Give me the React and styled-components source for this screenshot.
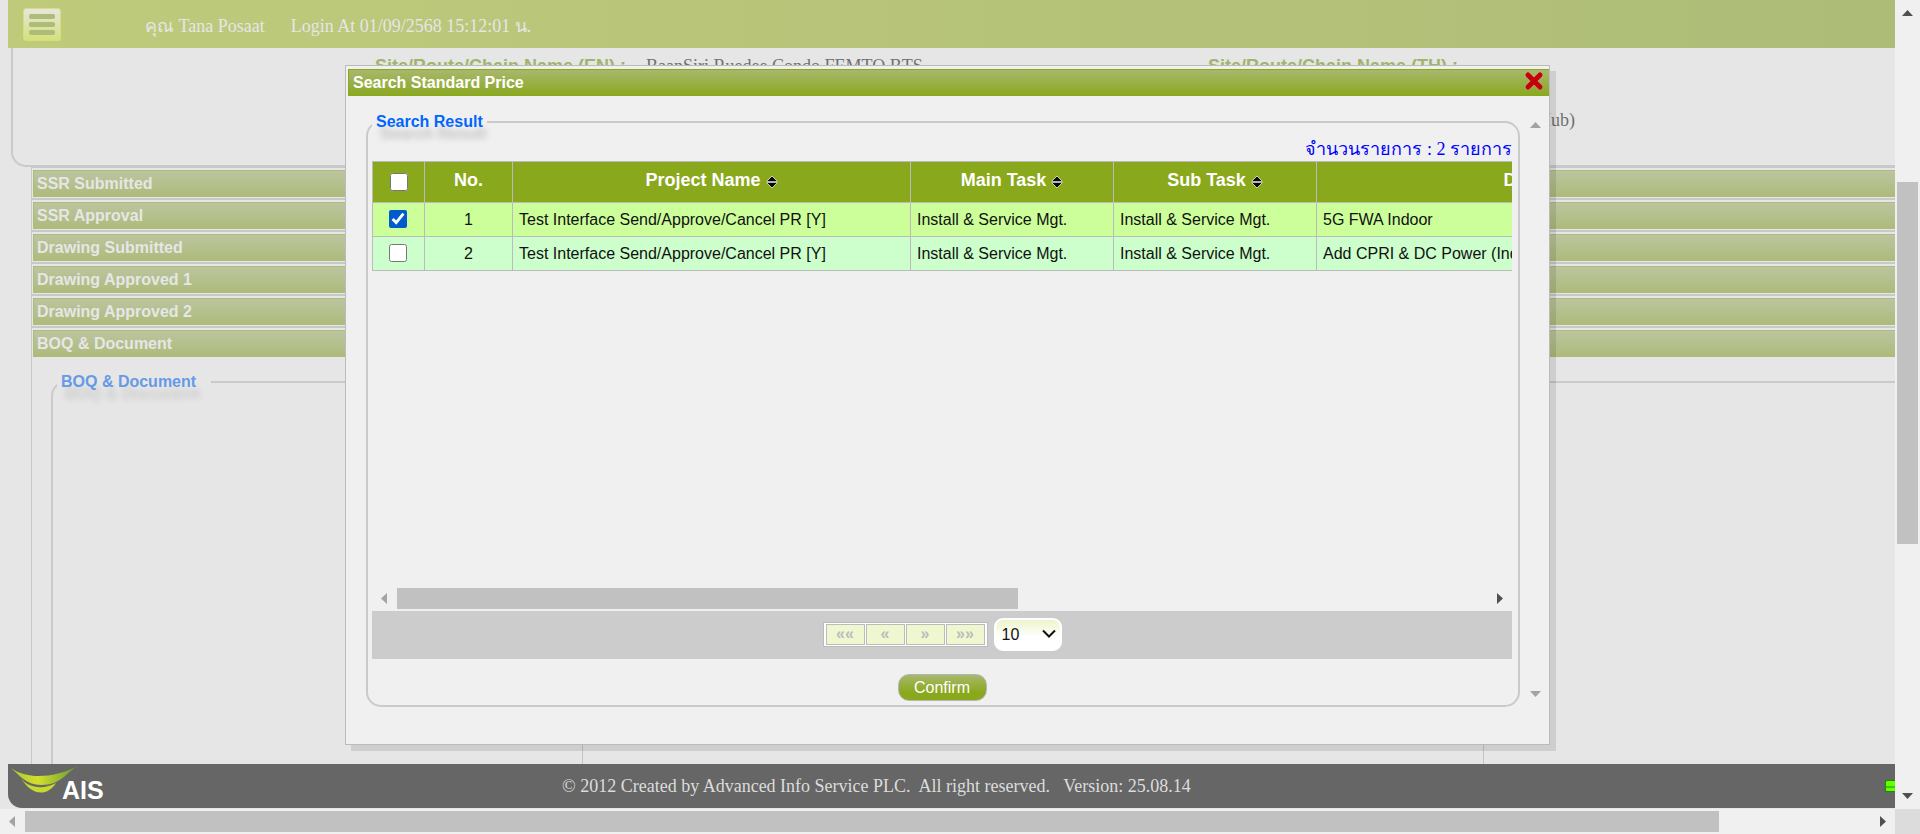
import React, { useState } from "react";
import styled, { createGlobalStyle } from "styled-components";

const sans = `"Liberation Sans", Arial, sans-serif`;
const serif = `"Liberation Serif", "Times New Roman", serif`;

const GlobalStyle = createGlobalStyle`
  * { box-sizing: border-box; }
  body { margin: 0; background: #e6e6e6; font-family: ${serif}; font-size: 18px; overflow: hidden; }
  button, input, select { font: inherit; margin: 0; }
`;

const Screen = styled.div`
  display: grid;
  grid-template: minmax(0, 1fr) 25px / minmax(0, 1fr) 25px;
  height: 100vh;
`;

const View = styled.div`
  position: relative;
  display: flex;
  flex-direction: column;
  overflow: hidden;
  padding-bottom: 1px;
`;

const Header = styled.header`
  display: flex;
  align-items: center;
  flex: none;
  height: 48px;
  margin-left: 8px;
  padding-left: 15px;
  color: #e6e6e6;
  background: linear-gradient(90deg, #bfcb7b, #adbc77);
  white-space: nowrap;
`;

const MenuButton = styled.button`
  display: flex;
  flex-direction: column;
  justify-content: center;
  gap: 3px;
  width: 38px;
  height: 33px;
  margin-right: 84px;
  padding: 0 5px;
  border: 1px solid #d6df7a;
  border-radius: 3px;
  background: linear-gradient(#e6e6e0, #d6e07c);
`;

const MenuLine = styled.span`
  height: 5px;
  border-radius: 2px;
  background: #adbc77;
`;

const UserInfo = styled.div`
  display: flex;
  gap: 26px;
  padding-top: 3px;
`;

const Main = styled.main`
  flex: 1;
  min-height: 0;
  overflow: hidden;
`;

const SitePanel = styled.section`
  display: grid;
  grid-template-columns: 362px 271px 562px 367px 1fr;
  align-content: start;
  row-gap: 30px;
  height: 119px;
  margin-left: 11px;
  padding-top: 6px;
  border: 2px solid #c9c9c9;
  border-width: 0 0 2px 2px;
  border-bottom-left-radius: 15px;
  line-height: 24px;
  color: #707070;
  white-space: nowrap;
`;

const SiteLabel = styled.span`
  grid-column: ${(p) => p.$col};
  font: bold 18px/24px ${sans};
  color: #9fb56d;
  text-shadow: 5px 12px 6px rgba(0, 0, 0, 0.1);
`;

const SiteValue = styled.span`
  grid-column: ${(p) => p.$col};
  justify-self: ${(p) => (p.$end ? "end" : "start")};
`;

const Accordion = styled.section`
  margin-left: 31px;
  border-left: 1px solid #c8c8c8;
`;

const AccordionItem = styled.div`
  padding: 2px 0 1px 1px;
  border: 1px solid #c8c8ca;
  border-width: 1px 0;
  &:last-of-type { border-bottom-color: transparent; }
`;

const AccordionBar = styled.button`
  display: block;
  width: 100%;
  height: 27px;
  padding: 0 3px;
  border: 1px solid #adbc77;
  border-width: 1px 0 1px 1px;
  background: linear-gradient(#bbc5a0, #aebb7a);
  color: #e6e6e6;
  font: bold 16px/24px ${sans};
  text-align: left;
`;

const Group = styled.fieldset`
  min-width: 0;
  margin: ${(p) => (p.$page ? "11px 0 0 19px" : "0")};
  padding: 0 6px 4px 4px;
  border: 2px solid #cacaca;
  border-radius: 15px;
  ${(p) => p.$page && `padding: 0; border-right: 0; border-top-right-radius: 0; border-bottom-right-radius: 0;`}
`;

const GroupTitle = styled.legend`
  margin-left: ${(p) => (p.$page ? "4px" : "0")};
  padding: 0 ${(p) => (p.$page ? "15px" : "4px")} 0 4px;
  font: bold 16px/24px ${sans};
  color: ${(p) => (p.$page ? "#6699e6" : "#0066ff")};
  text-shadow: 4px 12px 6px rgba(0, 0, 0, ${(p) => (p.$page ? 0.12 : 0.2)});
`;

const DocumentGrid = styled.div`
  display: grid;
  grid-template-columns: 530px 901px 1fr;
  height: 480px;
`;

const DocumentCell = styled.div`
  border-right: 1px solid #c4c4c4;
`;

const Footer = styled.footer`
  display: flex;
  align-items: center;
  flex: none;
  height: 44px;
  margin-left: 8px;
  border-bottom-left-radius: 14px;
  background: #666;
  color: #dcdcdc;
  white-space: pre;
  overflow: hidden;
`;

const Logo = styled.svg`
  flex: none;
  width: 100px;
  height: 44px;
  margin-right: 454px;
`;

const Status = styled.span`
  width: 10px;
  height: 12px;
  margin-left: auto;
  border: 1px solid #1d8a08;
  border-right: 0;
  border-radius: 2px 0 0 2px;
  background: linear-gradient(#66ff00 50%, #3fc80a 50% 75%, #66ff00 75%);
`;

const Overlay = styled.div`
  position: absolute;
  inset: 65px 0 auto;
  display: flex;
  justify-content: center;
`;

const Dialog = styled.section`
  width: calc(100% - 690px);
  min-width: 900px;
  padding: 3px 0 37px 2px;
  border: 1px solid #bbb;
  background: #f0f0f0;
  box-shadow: 6px 6px 0 rgba(0, 0, 0, 0.1);
`;

const DialogTitle = styled.header`
  display: flex;
  justify-content: space-between;
  height: 27px;
  padding: 0 5px 0 4px;
  border: 1px solid #8aa81c;
  border-right: 0;
  background: linear-gradient(#a8b86c, #8ba822);
`;

const DialogName = styled.h1`
  margin: 0;
  font: bold 16px/25px ${sans};
  color: #fff;
`;

const CloseButton = styled.button`
  width: 20px;
  height: 20px;
  padding: 0;
  border: 0;
  background: none;
  svg { display: block; }
`;

const DialogBody = styled.div`
  display: grid;
  grid-template-columns: minmax(0, 1fr) 25px;
  gap: 3px;
  padding: 14px 1px 0 18px;
`;

const Count = styled.p`
  margin: 0;
  padding-top: 4px;
  line-height: 23px;
  color: #0000ff;
  text-align: right;
`;

const TableArea = styled.div`
  height: 425px;
  overflow: hidden;
`;

const Table = styled.table`
  width: 1434px;
  table-layout: fixed;
  border-collapse: collapse;
  font: 16px/24px ${sans};
  color: #111;
  white-space: nowrap;
`;

const HeadCell = styled.th`
  width: ${(p) => p.$w}px;
  height: 41px;
  padding: 0 0 4px;
  border: 1px solid #bbb;
  background: #8aa81c;
  color: #fff;
  font-size: 18px;
  svg { margin-left: 5px; vertical-align: -3px; }
`;

const Row = styled.tr`
  height: 34px;
  background: ${(p) => (p.$selected ? "#ccff99" : "#ccffcc")};
`;

const Cell = styled.td`
  padding: 0 6px;
  border: 1px solid #bbb;
  text-align: ${(p) => (p.$center ? "center" : "left")};
`;

const CheckCell = styled(Cell)`
  padding: 0 2px 2px 0;
`;

const Check = styled.input`
  display: block;
  width: 18px;
  height: 18px;
  && { margin: ${(p) => (p.$head ? "4px" : "0")} auto 0; }
  accent-color: #005bcc;
`;

const Pager = styled.nav`
  display: flex;
  align-items: center;
  justify-content: center;
  gap: 6px;
  height: 48px;
  margin-bottom: 15px;
  padding-bottom: 1px;
  background: #ccc;
`;

const PageButtons = styled.div`
  display: flex;
  gap: 1px;
  padding: 1px 2px;
  border: 1px solid #bbb;
  background: #fff;
`;

const PageButton = styled.button`
  width: 39px;
  height: 21px;
  padding: 0 0 2px;
  border: 1px solid #bbb;
  background: #eff7d0;
  color: #bbb;
  font: bold 16px/18px ${sans};
`;

const PageSizeBox = styled.div`
  position: relative;
  width: 68px;
  height: 33px;
  svg {
    position: absolute;
    top: 11px;
    right: 6px;
    pointer-events: none;
  }
`;

const PageSize = styled.select`
  appearance: none;
  width: 100%;
  height: 100%;
  padding: 0 6px;
  border: 2px solid #fff;
  border-radius: 9px;
  background: linear-gradient(#eef5cc, #fff 60%);
  color: #111;
  font: 16px/24px ${sans};
`;

const Confirm = styled.button`
  display: block;
  width: 89px;
  height: 27px;
  && { margin: 0 auto; }
  padding: 0;
  border: 1px solid #b4b4bc;
  border-radius: 11px;
  background: linear-gradient(#a8b86c, #8aa81c 70%);
  color: #fff;
  font: 16px/24px ${sans};
`;

const Scroll = styled.div`
  display: flex;
  flex-direction: ${(p) => (p.$vertical ? "column" : "row")};
  padding-top: ${(p) => (p.$inset ? "2px" : "0")};
  background: #f0f0f0;
`;

const ScrollStep = styled.button`
  flex: none;
  width: 25px;
  height: 25px;
  padding: 0;
  border: 0;
  background: none;
  svg { display: block; }
`;

const ScrollTrack = styled.div`
  display: flex;
  flex: 1;
  flex-direction: ${(p) => (p.$vertical ? "column" : "row")};
  padding: ${(p) => (p.$vertical ? "0 2px" : "2px 0")};
`;

const ScrollThumb = styled.div`
  flex: 0 0 ${(p) => p.$size}%;
  margin: ${(p) => (p.$vertical ? `${p.$before}px 0 0` : "0")};
  background: #c1c1c1;
`;

const Corner = styled.div`
  background: #dcdcdc;
`;

const arrows = {
  up: "M7 16h11l-5.5-6z",
  down: "M7 9h11l-5.5 6z",
  left: "M15 7v11l-6-5.500z",
  right: "M10 7v11l6-5.500z",
};

function Step({ dir, disabled }) {
  return (
    <ScrollStep type="button" aria-label={`Scroll ${dir}`} tabIndex={-1}>
      <svg width="25" height="25" viewBox="0 0 25 25">
        <path d={arrows[dir]} fill={disabled ? "#a3a3a3" : "#505050"} />
      </svg>
    </ScrollStep>
  );
}

function ScrollBar({ vertical, inset, size, before = 0, atStart, atEnd }) {
  return (
    <Scroll $vertical={vertical} $inset={inset}>
      <Step dir={vertical ? "up" : "left"} disabled={atStart} />
      <ScrollTrack $vertical={vertical}>
        {size && <ScrollThumb $vertical={vertical} $size={size} $before={before} />}
      </ScrollTrack>
      <Step dir={vertical ? "down" : "right"} disabled={atEnd} />
    </Scroll>
  );
}

function SortIcon() {
  return (
    <svg width="12" height="14" viewBox="0 0 12 14">
      <path d="M6 1 11 6v2L6 13 1 8V6z" fill="#0a0a0a" stroke="#c9d3a0" strokeWidth="1" />
      <path d="M1 7h10" stroke="#b5b5b5" strokeWidth="2" />
    </svg>
  );
}

const sections = [
  "SSR Submitted",
  "SSR Approval",
  "Drawing Submitted",
  "Drawing Approved 1",
  "Drawing Approved 2",
  "BOQ & Document",
];

const rows = [
  { project: "Test Interface Send/Approve/Cancel PR [Y]", main: "Install & Service Mgt.", sub: "Install & Service Mgt.", description: "5G FWA Indoor" },
  { project: "Test Interface Send/Approve/Cancel PR [Y]", main: "Install & Service Mgt.", sub: "Install & Service Mgt.", description: "Add CPRI & DC Power (Indoor)" },
];

const columns = [
  { name: "Project Name", width: 398 },
  { name: "Main Task", width: 203 },
  { name: "Sub Task", width: 203 },
  { name: "Description", width: 490 },
];

export default function App() {
  const [checked, setChecked] = useState([true, false]);
  const toggle = (i) => setChecked(checked.map((c, n) => (n === i ? !c : c)));
  const all = checked.every(Boolean);

  return (
    <Screen>
      <GlobalStyle />
      <View>
        <Header>
          <MenuButton type="button" aria-label="Menu">
            <MenuLine /><MenuLine /><MenuLine />
          </MenuButton>
          <UserInfo>
            <span>คุณ Tana Posaat</span>
            <span>Login At 01/09/2568 15:12:01 น.</span>
          </UserInfo>
        </Header>

        <Main>
          <SitePanel>
            <SiteLabel $col={2}>Site/Route/Chain Name (EN) :</SiteLabel>
            <SiteValue $col={3}>BaanSiri Ruedee Condo FEMTO BTS</SiteValue>
            <SiteLabel $col={4}>Site/Route/Chain Name (TH) :</SiteLabel>
            <SiteValue $col={4} $end>(Hub)</SiteValue>
          </SitePanel>
          <Accordion>
            {sections.map((name) => (
              <AccordionItem key={name}>
                <AccordionBar type="button">{name}</AccordionBar>
              </AccordionItem>
            ))}
            <Group $page>
              <GroupTitle $page>BOQ &amp; Document</GroupTitle>
              <DocumentGrid>
                <DocumentCell />
                <DocumentCell />
              </DocumentGrid>
            </Group>
          </Accordion>
        </Main>

        <Footer>
          <Logo viewBox="0 0 100 44" role="img" aria-label="AIS">
            <defs>
              <linearGradient id="leaf">
                <stop offset="0" stopColor="#a9c92e" />
                <stop offset="0.400" stopColor="#d3de2c" />
                <stop offset="1" stopColor="#5d9a38" />
              </linearGradient>
            </defs>
            <path d="M3 4C18 15 44 15 70 2C58 8 54 21 33 21C19 21 12 12 3 4Z" fill="url(#leaf)" />
            <path d="M13 14C19 24 36 26 48 19C40 32 24 33 13 14Z" fill="#c6d92e" />
            <text x="54" y="35" fontFamily={sans} fontWeight="bold" fontSize="25" fill="#fff">AIS</text>
          </Logo>
          <span>© 2012 Created by Advanced Info Service PLC.  All right reserved.   Version: 25.08.14</span>
          <Status />
        </Footer>

        <Overlay>
          <Dialog role="dialog" aria-label="Search Standard Price">
            <DialogTitle>
              <DialogName>Search Standard Price</DialogName>
              <CloseButton type="button" aria-label="Close">
                <svg width="20" height="22" viewBox="0 0 20 22">
                  <path d="M4 5 16 17M16 5 4 17" stroke="#d9a0a0" strokeWidth="6" strokeLinecap="round" opacity="0.500" />
                  <path d="M4 5 16 17M16 5 4 17" stroke="#c4000c" strokeWidth="5" strokeLinecap="round" />
                </svg>
              </CloseButton>
            </DialogTitle>
            <DialogBody>
              <Group>
                <GroupTitle>Search Result</GroupTitle>
                <Count>จำนวนรายการ : 2 รายการ</Count>
                <TableArea>
                  <Table>
                    <thead>
                      <tr>
                        <HeadCell $w={52}>
                          <Check $head type="checkbox" aria-label="Select all" checked={all} onChange={() => setChecked(checked.map(() => !all))} />
                        </HeadCell>
                        <HeadCell $w={88}>No.</HeadCell>
                        {columns.map((c) => (
                          <HeadCell key={c.name} $w={c.width}>{c.name}<SortIcon /></HeadCell>
                        ))}
                      </tr>
                    </thead>
                    <tbody>
                      {rows.map((r, i) => (
                        <Row key={i} $selected={checked[i]}>
                          <CheckCell><Check type="checkbox" aria-label={`Select row ${i + 1}`} checked={checked[i]} onChange={() => toggle(i)} /></CheckCell>
                          <Cell $center>{i + 1}</Cell>
                          <Cell>{r.project}</Cell>
                          <Cell>{r.main}</Cell>
                          <Cell>{r.sub}</Cell>
                          <Cell>{r.description}</Cell>
                        </Row>
                      ))}
                    </tbody>
                  </Table>
                </TableArea>
                <ScrollBar size={57} atStart />
                <Pager aria-label="Pages">
                  <PageButtons>
                    {["««", "«", "»", "»»"].map((t) => (
                      <PageButton key={t} type="button">{t}</PageButton>
                    ))}
                  </PageButtons>
                  <PageSizeBox>
                    <PageSize aria-label="Rows per page" defaultValue="10">
                      <option>10</option>
                      <option>20</option>
                      <option>50</option>
                    </PageSize>
                    <svg width="14" height="10" viewBox="0 0 14 10" aria-hidden="true">
                      <path d="M1 1.500 7 7.500 13 1.500" fill="none" stroke="#111" strokeWidth="2" />
                    </svg>
                  </PageSizeBox>
                </Pager>
                <Confirm type="button">Confirm</Confirm>
              </Group>
              <ScrollBar vertical inset atStart atEnd />
            </DialogBody>
          </Dialog>
        </Overlay>
      </View>

      <ScrollBar vertical size={47.7} before={157} />
      <ScrollBar size={91.8} atStart />
      <Corner />
    </Screen>
  );
}
